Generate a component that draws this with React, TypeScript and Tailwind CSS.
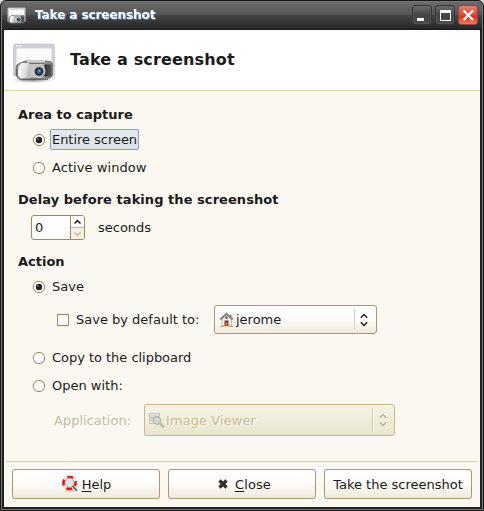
import React from 'react';

function CameraIcon({ size, className = '' }: { size: number; className?: string }) {
  return (
    <svg width={size} height={size} viewBox="0 0 44 44" className={`shrink-0 ${className}`}>
      <defs>
        <linearGradient id="camBody" x1="0" y1="0" x2="1" y2="0.3">
          <stop offset="0" stopColor="#9a9a9a" />
          <stop offset="0.2" stopColor="#f6f6f6" />
          <stop offset="0.7" stopColor="#e2e2e2" />
          <stop offset="1" stopColor="#bdbdbd" />
        </linearGradient>
        <linearGradient id="camGrip" x1="0" y1="0" x2="1" y2="0">
          <stop offset="0" stopColor="#2a2a2a" />
          <stop offset="1" stopColor="#555" />
        </linearGradient>
        <radialGradient id="camShade">
          <stop offset="0" stopColor="#444" stopOpacity="0.8" />
          <stop offset="1" stopColor="#999" stopOpacity="0" />
        </radialGradient>
      </defs>
      <path d="M1.500 6q0-2 2-2h37q2 0 2 2v30h-41z" fill="#cfcfda" stroke="#bdbdcb" strokeWidth="0.600" />
      <rect x="4.500" y="8.500" width="35" height="26" fill="#fcfcfe" />
      <path d="M4 6h2M7.500 6h2" stroke="#fff" strokeWidth="1.200" />
      <ellipse cx="21" cy="39.500" rx="22" ry="4" fill="url(#camShade)" />
      <path d="M4 28q0-4 4-5l5-2h22q5 0 5.500 3v10q0 4-5 4.500L10 40q-5-1-6-5z" fill="#8b8b8b" stroke="#666" strokeWidth="0.700" />
      <path d="M6 28q1-4 4-5h8v15.500h-8q-4-1-4-4z" fill="url(#camBody)" />
      <path d="M18 24h15v13.500H18z" fill="#c3c3c3" />
      <path d="M15 21.800h18" stroke="#ededed" strokeWidth="1.200" />
      <path d="M17 23.500h15" stroke="#666" strokeWidth="0.700" />
      <path d="M32 24.500h7.500v11l-1 1H30q4-5 2-12z" fill="url(#camGrip)" />
      <circle cx="27" cy="31.500" r="6" fill="#adadad" stroke="#ddd" strokeWidth="0.800" />
      <circle cx="27" cy="31.500" r="4.200" fill="#242a33" />
      <circle cx="27" cy="31.500" r="2.400" fill="#2c66a3" />
      <circle cx="27.600" cy="30.800" r="0.900" fill="#8cc4f0" />
      <path d="M5 29v7" stroke="#555" strokeWidth="1" />
      <path d="M10 39.300h26" stroke="#555" strokeWidth="0.900" />
    </svg>
  );
}

function Arrows({ color }: { color: string }) {
  return (
    <svg width="10" height="14" viewBox="0 0 10 14" className="shrink-0" fill="none" stroke={color} strokeWidth="1.4">
      <path d="M1.800 4.700 5 1.500l3.200 3.200M1.800 9.300 5 12.500l3.200-3.200" />
    </svg>
  );
}

function Radio({ checked = false }: { checked?: boolean }) {
  return (
    <svg width="14" height="14" viewBox="0 0 14 14" className="shrink-0">
      <circle cx="7" cy="7" r="5.600" fill="#fff" stroke="#9b8354" strokeWidth="1" />
      <path d="M3 2.200A6.300 6.300 0 0 0 1.200 9.500" fill="none" stroke="#e5bfd0" strokeWidth="0.700" />
      {checked && <circle cx="7" cy="7" r="3.200" fill="#202126" />}
      {checked && <circle cx="6" cy="6" r="0.900" fill="#777980" />}
    </svg>
  );
}

type OptionProps = { label: string; checked?: boolean; focused?: boolean; tracking?: string };

function Option({ label, checked, focused, tracking = '' }: OptionProps) {
  return (
    <div className="ml-7 flex h-[21px] items-center">
      <Radio checked={checked} />
      <span
        className={`ml-1 flex h-[21px] items-center ${tracking} ${
          focused
            ? 'rounded-[2px] border border-[#8ba0b4] bg-linear-to-b from-[#e3e8ec] to-[#dce3e8] px-[1px]'
            : 'px-[2px]'
        }`}
      >
        {label}
      </span>
    </div>
  );
}

function HouseIcon() {
  return (
    <svg width="16" height="16" viewBox="0 0 16 16" className="shrink-0">
      <path d="M3 7 7.500 2.500l5 4.500V14H3z" fill="#f3f2ef" stroke="#b5b1aa" strokeWidth="0.800" />
      <path d="M11 2.500h1.500v3H11z" fill="#8f7a70" />
      <path d="M1.300 7.500 7.500 2 13.800 7.500" fill="none" stroke="#85837d" strokeWidth="2.200" />
      <circle cx="7.500" cy="5.800" r="1.200" fill="#555" />
      <path d="M5.500 8.500h4V14h-4z" fill="#7a3a1c" />
      <path d="M6.500 10.500h2v3h-2z" fill="#e57d26" />
      <path d="M1 14.300h4M10 14.300h4" stroke="#93a084" strokeWidth="0.900" />
    </svg>
  );
}

function ViewerIcon() {
  return (
    <svg width="17" height="17" viewBox="0 0 17 17" className="shrink-0" fill="none">
      <path d="M1.500 1.500h10v10h-10z" fill="#e8e8df" stroke="#c4c5bc" />
      <path d="M3 9V4h7v5zM3 5l3 2 3-3M3 8l3-3 4 3" stroke="#c5c6be" />
      <circle cx="9" cy="8.500" r="3.700" fill="#d5d7cf" fillOpacity=".75" stroke="#b8baaf" strokeWidth="1.400" />
      <path d="m12 11.500 4 4" stroke="#bcbdb3" strokeWidth="2.500" />
    </svg>
  );
}

function HelpIcon() {
  return (
    <svg width="18" height="18" viewBox="0 0 18 18" className="shrink-0" fill="none">
      <ellipse cx="10" cy="15.800" rx="6.500" ry="1.300" fill="#d5d0c8" />
      <circle cx="8.500" cy="8" r="5.800" stroke="#f8eeec" strokeWidth="3.200" />
      <circle cx="8.500" cy="8" r="7.200" stroke="#e0aaa5" strokeWidth="0.600" />
      <circle cx="8.500" cy="8" r="5.800" stroke="#e01518" strokeWidth="3" strokeDasharray="5.600 3.510" strokeDashoffset="2.800" />
      <circle cx="8.500" cy="7.800" r="4.600" fill="#e4e4e2" stroke="#a2a2a2" />
      <path d="M6 6.500Q7 5 9 5" stroke="#fff" />
      <path d="m11.500 11 4.300 4.500" stroke="#555" strokeWidth="1.600" />
    </svg>
  );
}

const dialogButton =
  'flex h-[30px] items-center justify-center rounded-[3px] border border-[#ad9a6c] bg-linear-to-b from-white via-[#fdfcfa] via-50% to-[#f1ead9]';
const windowButton =
  'flex size-5 items-center justify-center rounded-[3px] border';
const grayButton =
  'border-[#353535] bg-linear-to-b from-[#6c6c6c] via-[#444] via-50% to-[#4a4a4a] shadow-[inset_0_0_0_1px_#6666]';

export default function App() {
  return (
    <div className="h-[511px] w-[484px] overflow-hidden bg-[#d8d8d8] font-['DejaVu_Sans',sans-serif] text-[13px] leading-[15px] whitespace-nowrap text-[#1a1a1a]">
      <div className="h-full rounded-t-[6px] border border-[#171717] bg-[#777]">
        <div className="h-full pr-px pb-px pl-px">
          <div className="flex h-full flex-col rounded-t-[5px] border-t border-[#777] bg-[#24201e] px-[2px] pb-[2px]">
            <header className="-mx-[2px] flex h-7 shrink-0 items-center rounded-t-[5px] border-b border-[#1a1a1a] bg-[linear-gradient(#6c6c6c,#545454_46%,#444_50%,#262626)] pr-1 pl-[5px]">
              <CameraIcon size={19} />
              <span className="ml-[9px] grow text-[12px] font-bold tracking-[-0.08px] text-white [text-shadow:1px_1px_1px_#4d7cab]">Take a screenshot</span>
              <div className="-mt-px flex gap-[3px]">
                <div className={`${windowButton} ${grayButton}`}>
                  <svg width="18" height="18"><path d="M4 12h7v3H4z" fill="#fff" /></svg>
                </div>
                <div className={`${windowButton} ${grayButton}`}>
                  <svg width="18" height="18"><path d="M4 4h11v11H4zM5 7v7h9V7z" fill="#fff" fillRule="evenodd" /></svg>
                </div>
                <div className={`${windowButton} border-[#8d493f] bg-linear-to-b from-[#df806e] via-[#dd3519] via-60% to-[#ef795e]`}>
                  <svg width="18" height="18"><path d="m4.500 4.500 9.500 9.500M14 4.500 4.500 14" stroke="#fff" strokeWidth="2.300" /></svg>
                </div>
              </div>
            </header>
            <main className="flex grow flex-col bg-[#fbf8f1]">
              <div className="flex h-[61px] shrink-0 items-center border-b border-[#dfd3aa] bg-white pl-2">
                <CameraIcon size={44} className="mt-[3px]" />
                <h1 className="-mt-[2px] ml-[14px] text-[16px] font-bold tracking-[0.15px]">Take a screenshot</h1>
              </div>
              <section className="pt-[13px] pl-[14px]">
                <h2 className="flex h-5 items-center font-bold">Area to capture</h2>
                <div className="-ml-[14px] flex flex-col gap-[7px] pt-[5px]">
                  <Option label="Entire screen" checked focused tracking="tracking-[-0.04px]" />
                  <Option label="Active window" tracking="tracking-[0.06px]" />
                </div>
              </section>
              <section className="pt-[11px] pl-[14px]">
                <h2 className="flex h-5 items-center font-bold tracking-[0.05px]">Delay before taking the screenshot</h2>
                <div className="mt-[6px] ml-[13px] flex items-center">
                  <div className="flex h-[25px] w-[54px] overflow-hidden rounded-[3px] border border-[#a18a58] bg-white">
                    <span className="flex grow items-center pl-[3px]">0</span>
                    <div className="flex w-[14px] flex-col border-l border-[#a18a58]">
                      <div className="flex h-3 items-center justify-center border-b border-[#cdb88b] bg-white">
                        <svg width="9" height="6" fill="none" stroke="#171717" strokeWidth="1.500"><path d="m1.500 4.500 3-3 3 3" /></svg>
                      </div>
                      <div className="flex grow items-center justify-center bg-[#f6f0e4]">
                        <svg width="9" height="6" fill="none" stroke="#c6b99e" strokeWidth="1.300"><path d="m1.500 1.500 3 3 3-3" /></svg>
                      </div>
                    </div>
                  </div>
                  <span className="ml-[13px]">seconds</span>
                </div>
              </section>
              <section className="pt-[11px]">
                <h2 className="flex h-5 items-center pl-[14px] font-bold">Action</h2>
                <div className="pt-[5px]">
                  <Option label="Save" checked />
                </div>
                <div className="mt-2 ml-[53px] flex h-[29px] items-center">
                  <span className="size-3 shrink-0 border border-[#a18a58] bg-white" />
                  <span className="ml-[7px] w-[138px]">Save by default to:</span>
                  <div className="flex h-[29px] w-[163px] items-center rounded-[3px] border border-[#ad9a6c] bg-linear-to-b from-white via-[#fdfcfa] via-50% to-[#f1ead9] pl-1">
                    <HouseIcon />
                    <span className="ml-px grow">jerome</span>
                    <span className="h-[21px] w-px bg-[#dfd1ab]" />
                    <span className="mr-[3px] flex w-[18px] justify-center"><Arrows color="#1c1c1c" /></span>
                  </div>
                </div>
                <div className="mt-[13px] flex flex-col gap-[7px]">
                  <Option label="Copy to the clipboard" tracking="tracking-[-0.03px]" />
                  <Option label="Open with:" />
                </div>
                <div className="mt-2 ml-[50px] flex h-8 items-center">
                  <span className="w-[90px] text-[#c6baa0] [text-shadow:1px_1px_0_#fff]">Application:</span>
                  <div className="flex h-8 w-[251px] items-center rounded-[3px] border border-[#cfb981] bg-linear-to-b from-[#f5f3e7] via-[#efeddb] via-50% to-[#e8e6cf] pl-[3px] text-[#cdb98b]">
                    <ViewerIcon />
                    <span className="ml-[1px] grow tracking-[0.08px] [text-shadow:1px_1px_0_#fff]">Image Viewer</span>
                    <span className="h-6 w-[2px] border-l border-[#dacba0] bg-white" />
                    <span className="mr-[2px] flex w-[18px] justify-center"><Arrows color="#b9b294" /></span>
                  </div>
                </div>
              </section>
              <hr className="mx-[2px] mt-[25px] border-[#d9ceb5]" />
              <footer className="mt-[7px] flex justify-center gap-2">
                <button className={`${dialogButton} w-[148px]`}>
                  <HelpIcon />
                  <span className="ml-[3px]"><span className="underline underline-offset-2">H</span>elp</span>
                </button>
                <button className={`${dialogButton} w-[148px] pl-[5px]`}>
                  <svg width="10" height="10" viewBox="0 0 10 10"><path d="m1.500 1.500 7 7M8.500 1.500l-7 7" stroke="#303030" strokeWidth="3.300" /></svg>
                  <span className="ml-[7px] tracking-[0.1px]"><span className="underline underline-offset-2">C</span>lose</span>
                </button>
                <button className={`${dialogButton} w-[148px]`}>Take the screenshot</button>
              </footer>
            </main>
          </div>
        </div>
      </div>
    </div>
  );
}
